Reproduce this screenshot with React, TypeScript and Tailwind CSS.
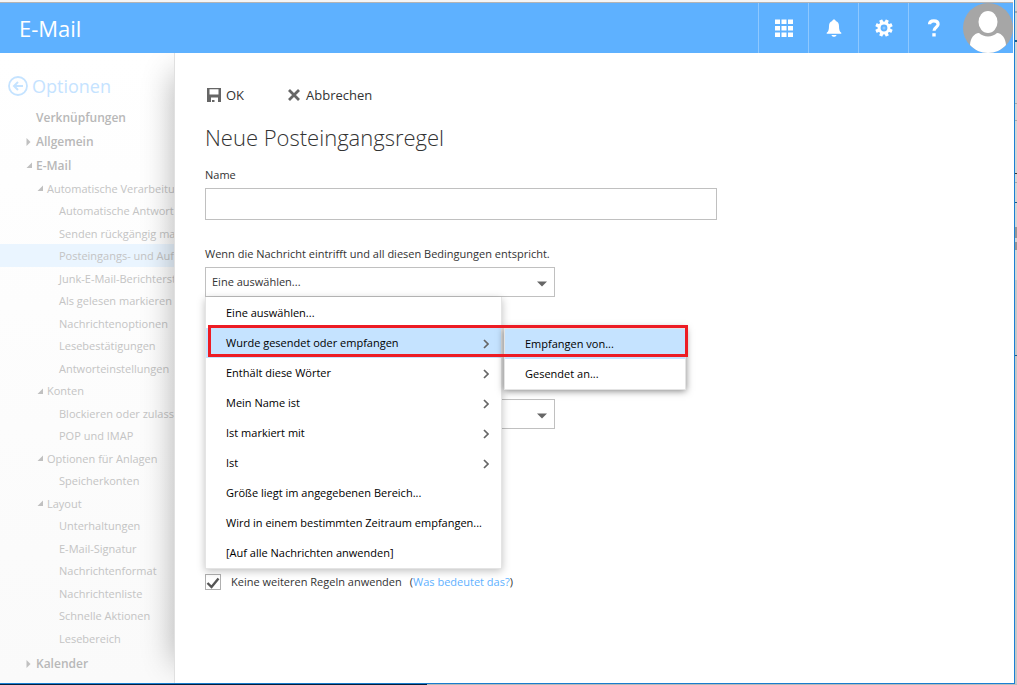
import { useState } from "react";
import clsx from "clsx";

type NavRow = { label: string; group?: boolean; active?: boolean };

const MAIL_ROWS: NavRow[] = [
  { label: "Automatische Verarbeitung", group: true },
  { label: "Automatische Antworten" },
  { label: "Senden rückgängig machen" },
  { label: "Posteingangs- und Aufräumregeln", active: true },
  { label: "Junk-E-Mail-Berichterstattung" },
  { label: "Als gelesen markieren" },
  { label: "Nachrichtenoptionen" },
  { label: "Lesebestätigungen" },
  { label: "Antworteinstellungen" },
  { label: "Konten", group: true },
  { label: "Blockieren oder zulassen" },
  { label: "POP und IMAP" },
  { label: "Optionen für Anlagen", group: true },
  { label: "Speicherkonten" },
  { label: "Layout", group: true },
  { label: "Unterhaltungen" },
  { label: "E-Mail-Signatur" },
  { label: "Nachrichtenformat" },
  { label: "Nachrichtenliste" },
  { label: "Schnelle Aktionen" },
  { label: "Lesebereich" },
];

const CONDITIONS = [
  { label: "Eine auswählen..." },
  { label: "Wurde gesendet oder empfangen", sub: ["Empfangen von...", "Gesendet an..."] },
  { label: "Enthält diese Wörter", sub: [] },
  { label: "Mein Name ist", sub: [] },
  { label: "Ist markiert mit", sub: [] },
  { label: "Ist", sub: [] },
  { label: "Größe liegt im angegebenen Bereich..." },
  { label: "Wird in einem bestimmten Zeitraum empfangen..." },
  { label: "[Auf alle Nachrichten anwenden]" },
];

export default function App() {
  return (
    <div className="flex min-h-screen flex-col bg-white font-['Open_Sans','Noto_Sans',sans-serif] text-[11px] text-[#333]">
      <div className="flex flex-1">
        <div className="flex min-w-0 flex-1 flex-col border-r border-b border-[#1a80d4] pr-px">
          <div className="h-[3px] border-b border-[#b4b4b4] bg-[#f5f5f5]" />
          <TopBar />
          <div className="flex flex-1">
            <Sidebar />
            <main className="z-10 min-w-0 flex-1 border-l border-[#e0e0e0] bg-white pr-8 pl-[30px] shadow-[-20px_0_30px_-20px_rgba(0,0,0,0.3)]">
              <RuleForm />
            </main>
          </div>
        </div>
        <WindowEdge />
      </div>
      <div className="flex h-px">
        <div className="w-[42%] bg-[#04203f]" />
        <div className="flex-1 bg-[#bdbdbd]" />
      </div>
    </div>
  );
}

function TopBar() {
  return (
    <header className="z-20 flex h-[50px] items-center justify-between bg-[#5eb1ff] text-white">
      <span className="pl-[19px] text-[22px] leading-7">E-Mail</span>
      <div className="flex h-full">
        <HeaderButton label="App-Startfeld">
          <svg width="18" height="18" viewBox="0 0 18 18" fill="currentColor">
            {[0.5, 7, 13.5].map((y) => [0, 6.5, 13].map((x) => <rect key={`${x}-${y}`} x={x} y={y} width="5" height="4.5" />))}
          </svg>
        </HeaderButton>
        <HeaderButton label="Benachrichtigungen">
          <svg width="16" height="18" viewBox="0 0 16 18" fill="currentColor">
            <path d="M8 0.500c1 0 1.600.6 1.700 1.400 2.200.7 3.300 2.500 3.300 5 0 3.600.5 5.300 2.300 6.900v1H.7v-1C2.500 12.200 3 10.500 3 6.900c0-2.500 1.100-4.300 3.300-5C6.400 1.100 7 .5 8 .5zM5.500 16h5c-.2 1-1.100 1.800-2.500 1.800S5.700 17 5.500 16z" />
          </svg>
        </HeaderButton>
        <HeaderButton label="Einstellungen">
          <svg width="18" height="18" viewBox="0 0 18 18">
            <g fill="currentColor">
              {[22.5, 67.5, 112.5, 157.5, 202.5, 247.5, 292.5, 337.5].map((a) => (
                <rect key={a} x="7.300" y="0.300" width="3.400" height="4.500" rx="0.500" transform={`rotate(${a} 9 9)`} />
              ))}
            </g>
            <circle cx="9" cy="9" r="4.900" fill="none" stroke="currentColor" strokeWidth="3" />
            <circle cx="9" cy="9" r="1.500" fill="currentColor" opacity="0.3" />
          </svg>
        </HeaderButton>
        <HeaderButton label="Hilfe">
          <svg width="14" height="18" viewBox="0 0 14 18" fill="none" stroke="currentColor" strokeWidth="3.200">
            <path d="M2.500 5.200C2.600 2.800 4.300 1.900 6.800 1.900c2.700 0 4.300 1.200 4.300 3.300 0 3-4.100 3-4.100 6.600" />
            <path d="M7 14.200v3.300" strokeWidth="3.400" />
          </svg>
        </HeaderButton>
        <button type="button" aria-label="Konto" className="flex w-[55px] items-center justify-end">
          <svg width="50" height="50" viewBox="0 0 50 50">
            <circle cx="25" cy="25" r="25" fill="#a6a6a6" />
            <ellipse cx="25" cy="19" rx="9.500" ry="11" fill="#fff" />
            <path d="M7 42C7.500 35 11 30.500 16 30c2.500 2.200 5.500 3.500 9 3.500s6.500-1.300 9-3.500c5 .5 8.500 5 9 12-4.500 5-11 8-18 8S11.500 47 7 42z" fill="#fff" />
          </svg>
        </button>
      </div>
    </header>
  );
}

function HeaderButton({ label, children }: { label: string; children: React.ReactNode }) {
  return (
    <button type="button" aria-label={label} className="flex w-[50px] items-center justify-center border-l border-[#8ec8ff]">
      {children}
    </button>
  );
}

function Sidebar() {
  return (
    <nav className="w-[174px] shrink-0 overflow-hidden bg-linear-to-b from-white to-[#fafafa] pt-[18px] whitespace-nowrap text-[#c4c4c4]">
      <a href="#zurueck" className="flex h-[30px] items-center gap-1 pl-2 text-lg text-[#c5e3ff]">
        <svg width="20" height="20" viewBox="0 0 20 20" fill="none" stroke="currentColor" strokeWidth="1.800">
          <circle cx="10" cy="10" r="9" />
          <path d="M15 10H6M10 6l-4 4 4 4" strokeWidth="2" />
        </svg>
        Optionen
      </a>
      <div className="pt-1">
        <TopRow label="Verknüpfungen" />
        <TopRow label="Allgemein" caret="closed" />
        <TopRow label="E-Mail" caret="open" />
      </div>
      <ul>
        {MAIL_ROWS.map((row) => (
          <li key={row.label} className={clsx("odd:h-[22px] even:h-[23px]", row.active && "bg-[#eaf5ff]")}>
            <a href="#option" className={clsx("flex h-full items-center pt-0.5", row.group ? "pl-9" : "pl-[59px]")}>
              {row.group && <Caret open />}
              {row.label}
            </a>
          </li>
        ))}
      </ul>
      <div className="pt-0.5">
        <TopRow label="Kalender" caret="closed" />
      </div>
    </nav>
  );
}

function TopRow({ label, caret }: { label: string; caret?: "open" | "closed" }) {
  return (
    <a href="#bereich" className="flex h-6 items-center pt-0.5 pl-[25px] text-xs font-semibold text-[#b8b8b8]">
      {caret ? <Caret open={caret === "open"} /> : <span className="w-[11px]" />}
      {label}
    </a>
  );
}

function Caret({ open }: { open: boolean }) {
  return (
    <svg width="11" height="8" viewBox="0 0 11 8" className="shrink-0" fill="#c0c0c0">
      {open ? <path d="M7 0.500v5.500H1.500z" /> : <path d="M1.500 0v8l4-4z" />}
    </svg>
  );
}

function RuleForm() {
  const [name, setName] = useState("");
  return (
    <form onSubmit={(e) => e.preventDefault()}>
      <div className="flex items-center gap-11 pt-8 text-[13px] leading-5">
        <button type="submit" className="flex items-center gap-[5px] pl-0.5">
          <svg width="14" height="14" viewBox="0 0 14 14" fill="#666">
            <path fillRule="evenodd" d="M0 0h14v14h-3v-4.500H4V14H0zM2.500 1.200v5.300h9V1.200zM5 12h2.500v2H5z" />
          </svg>
          OK
        </button>
        <button type="button" className="flex items-center gap-1.5">
          <svg width="12" height="12" viewBox="0 0 12 12" fill="none" stroke="#666" strokeWidth="2.800">
            <path d="M1 1l10 10M11 1L1 11" />
          </svg>
          Abbrechen
        </button>
      </div>
      <h1 className="pt-4 text-[22px] leading-8 font-light">Neue Posteingangsregel</h1>
      <label htmlFor="rule-name" className="mt-3 block leading-5">
        Name
      </label>
      <input
        id="rule-name"
        value={name}
        onChange={(e) => setName(e.target.value)}
        className="mt-[3px] block h-8 w-full max-w-lg border border-[#c0c0c0] px-1.5 outline-none"
      />
      <label htmlFor="rule-condition" className="mt-6 block leading-5">
        Wenn die Nachricht eintrifft und all diesen Bedingungen entspricht.
      </label>
      <div className="relative mt-[3px] max-w-[350px]">
        <Dropdown id="rule-condition" options={["Eine auswählen..."]} />
        <ConditionMenu />
      </div>
      <div className="mt-[102px] max-w-[350px]">
        <Dropdown id="rule-action" ariaLabel="Aktion" options={[]} />
      </div>
      <div className="mt-[145px] flex items-center gap-2">
        <label className="flex items-center gap-2.5">
          <span className="grid">
            <input
              type="checkbox"
              defaultChecked
              className="peer col-start-1 row-start-1 size-4 appearance-none border border-[#b0b0b0] bg-white"
            />
            <svg width="16" height="16" viewBox="0 0 16 16" fill="none" stroke="#555" strokeWidth="2.400" className="pointer-events-none invisible col-start-1 row-start-1 peer-checked:visible">
              <path d="M2.500 9l4 4 7-8.500" />
            </svg>
          </span>
          Keine weiteren Regeln anwenden
        </label>
        <span>
          (<a href="#hilfe" className="text-[#5eb1ff]">Was bedeutet das?</a>)
        </span>
      </div>
    </form>
  );
}

function Dropdown({ id, ariaLabel, options }: { id: string; ariaLabel?: string; options: string[] }) {
  return (
    <div className="grid items-center">
      <select id={id} aria-label={ariaLabel} className="col-start-1 row-start-1 h-[30px] w-full appearance-none border border-[#c0c0c0] bg-white px-1.5">
        {options.map((o) => (
          <option key={o}>{o}</option>
        ))}
      </select>
      <svg width="10" height="6" viewBox="0 0 10 6" fill="#666" className="pointer-events-none col-start-1 row-start-1 mt-1 mr-2 justify-self-end">
        <path d="M0 .5h10L5 5.500z" />
      </svg>
    </div>
  );
}

function ConditionMenu() {
  return (
    <ul className="absolute top-full left-0 w-[297px] border border-t-0 border-[#e4e4e4] bg-white pt-px text-black shadow-[0_2px_8px_rgba(0,0,0,0.25)]">
      {CONDITIONS.map((c) => {
        const open = !!c.sub?.length;
        return (
          <li key={c.label} className="relative">
            <button type="button" className={clsx("flex h-[30px] w-full items-center justify-between pt-px pr-3 pl-5 whitespace-nowrap", open && "bg-[#c5e3ff]")}>
              {c.label}
              {c.sub && (
                <svg width="6" height="10" viewBox="0 0 6 10" className="shrink-0" fill="none" stroke="#666" strokeWidth="1.700">
                  <path d="M1 1l4 4-4 4" />
                </svg>
              )}
            </button>
            {open && <SubMenu items={c.sub!} />}
          </li>
        );
      })}
    </ul>
  );
}

function SubMenu({ items }: { items: string[] }) {
  return (
    <>
      <ul className="absolute top-0 left-[298px] w-[182px] border border-[#e4e4e4] bg-white shadow-[0_1px_7px_rgba(0,0,0,0.5)]">
        {items.map((item, i) => (
          <li key={item}>
            <button type="button" className={clsx("flex h-[30px] w-full items-center pl-5", i === 0 && "bg-[#c5e3ff]")}>
              {item}
            </button>
          </li>
        ))}
      </ul>
      {/* red marker around the chosen path */}
      <div className="pointer-events-none absolute -top-[3px] left-0.5 h-8 w-[480px] border-3 border-[#ed1c24]" />
    </>
  );
}

/* sliver of the desktop right of the window */
function WindowEdge() {
  return (
    <svg width="2" height="684" viewBox="0 0 2 684" className="shrink-0 bg-[#c6c6c6]">
      <path d="M0 0h2v280H0z" fill="#d4d4d4" />
      <path d="M0 11h2v2H0zM0 103h2v1H0zM0 120h2v1H0zM0 182h2v1H0z" fill="#a8a8a8" />
      <path d="M0 40h2v2H0zM0 202h2v1H0zM0 355h2v1H0z" fill="#1c5f8a" />
      <path d="M0 173h2v1H0z" fill="#333" />
      <path d="M0 227h2v11H0zM0 242h2v8H0z" fill="#969696" />
    </svg>
  );
}
